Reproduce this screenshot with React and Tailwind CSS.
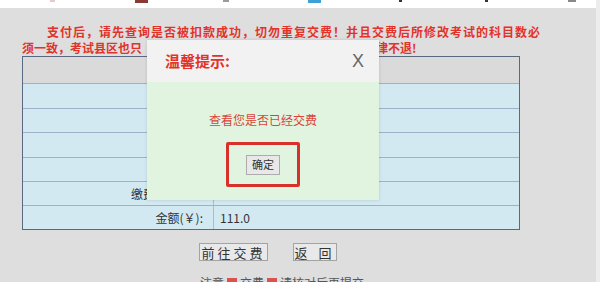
import React from "react";

const rows = [
  { label: "", value: "" },
  { label: "", value: "" },
  { label: "", value: "" },
  { label: "", value: "" },
  { label: "缴费科目数：", value: "" },
  { label: "金额(￥):", value: "111.0" },
];

const rowHeights = ["h-[25px]", "h-[24px]", "h-[25px]", "h-[24px]", "h-[24px]", "h-[24px]"];

export default function App() {
  return (
    <div className="relative w-[600px] h-[282px] overflow-hidden bg-[#dedede] flex font-['Noto_Sans_CJK_SC','Liberation_Sans',sans-serif]">
      <div className="flex-1 flex flex-col">
        {/* top browser strip */}
        <div className="h-[8px] bg-white flex items-start shrink-0">
          <span className="ml-[50px] w-[5px] h-[2px] bg-[#e7c9c9]" />
          <span className="ml-[80px] w-[13px] h-[3px] bg-[#8a3a30]" />
          <span className="ml-[75px] w-[6px] h-[2px] bg-[#9a9a9a]" />
          <span className="ml-[79px] w-[13px] h-[3px] bg-[#3fa0d8]" />
          <span className="ml-[78px] w-[3px] h-[2px] bg-[#333]" />
          <span className="ml-[83px] w-[3px] h-[2px] bg-[#333]" />
          <span className="ml-[80px] w-[8px] h-[2px] bg-[#888]" />
        </div>

        {/* warning text */}
        <div className="pt-[16px] pl-[22px] text-[12px] leading-[16px] font-bold text-[#e2332b]">
          <div className="pl-[25px] tracking-[1px] whitespace-nowrap">
            支付后，请先查询是否被扣款成功，切勿重复交费！并且交费后所修改考试的科目数必
          </div>
          <div className="whitespace-nowrap">
            须一致，考试县区也只{"\u2002"}能在本市范围内修改，否则造成损失费用一律不退!
          </div>
        </div>

        {/* table */}
        <div className="ml-[22px] mt-[0px] w-[498px] border border-[#5a6880] bg-[#d3e9f2] text-[12px] text-[#333]">
          <div className="h-[26px] bg-[#dadada]" />
          {rows.map((r, i) => (
            <div key={i} className={`${rowHeights[i]} flex border-t border-[#9db1c9]`}>
              <div className="w-[190px] flex items-center justify-end pr-[10px]">{r.label}</div>
              <div className="flex-1 flex items-center pl-[6px] border-l border-[#a9bcd0]">{r.value}</div>
            </div>
          ))}
        </div>

        {/* buttons */}
        <div className="mt-[13px] pl-[199px] flex gap-[25px]">
          <button className="w-[69px] h-[18px] bg-[#e9e9e9] border border-[#a3a3a3] text-[13px] leading-none text-[#333] tracking-[3px] flex items-center justify-center">
            前往交费
          </button>
          <button className="w-[44px] h-[18px] bg-[#e9e9e9] border border-[#a3a3a3] text-[13px] leading-none text-[#333] tracking-[4px] flex items-center justify-center">
            返 回
          </button>
        </div>

        {/* cut-off bottom line */}
        <div className="mt-[15px] pl-[200px] flex items-center gap-[3px] text-[12px] leading-[14px] text-[#555]">
          <span>注意</span>
          <span className="w-[10px] h-[10px] bg-[#d9534f]" />
          <span>交费</span>
          <span className="w-[10px] h-[10px] bg-[#d9534f]" />
          <span>请核对后再提交</span>
        </div>
      </div>
      <div className="w-[4px] bg-[#ececec]" />

      {/* modal */}
      <div className="absolute left-[147px] top-[40px] w-[232px] h-[160px] flex flex-col shadow-[0_0_3px_rgba(0,0,0,0.15)]">
        <div className="h-[42px] bg-[#f2f2f2] flex items-center justify-between pl-[18px] pr-[15px]">
          <span className="text-[15px] font-bold text-[#e2332b]">温馨提示:</span>
          <span className="text-[18px] text-[#666] font-['Liberation_Sans',sans-serif] font-light">X</span>
        </div>
        <div className="flex-1 bg-[#e1f4e0] flex flex-col items-center">
          <div className="mt-[30px] text-[12px] leading-[16px] text-[#d9443a]">查看您是否已经交费</div>
          <div className="mt-[14px] w-[74px] h-[45px] border-[3px] border-[#d8302a] rounded-[2px] flex items-center justify-center">
            <button className="w-[34px] h-[20px] bg-[#e8e8e8] border border-[#acacac] text-[11px] leading-none text-[#333]">
              确定
            </button>
          </div>
        </div>
      </div>
    </div>
  );
}
